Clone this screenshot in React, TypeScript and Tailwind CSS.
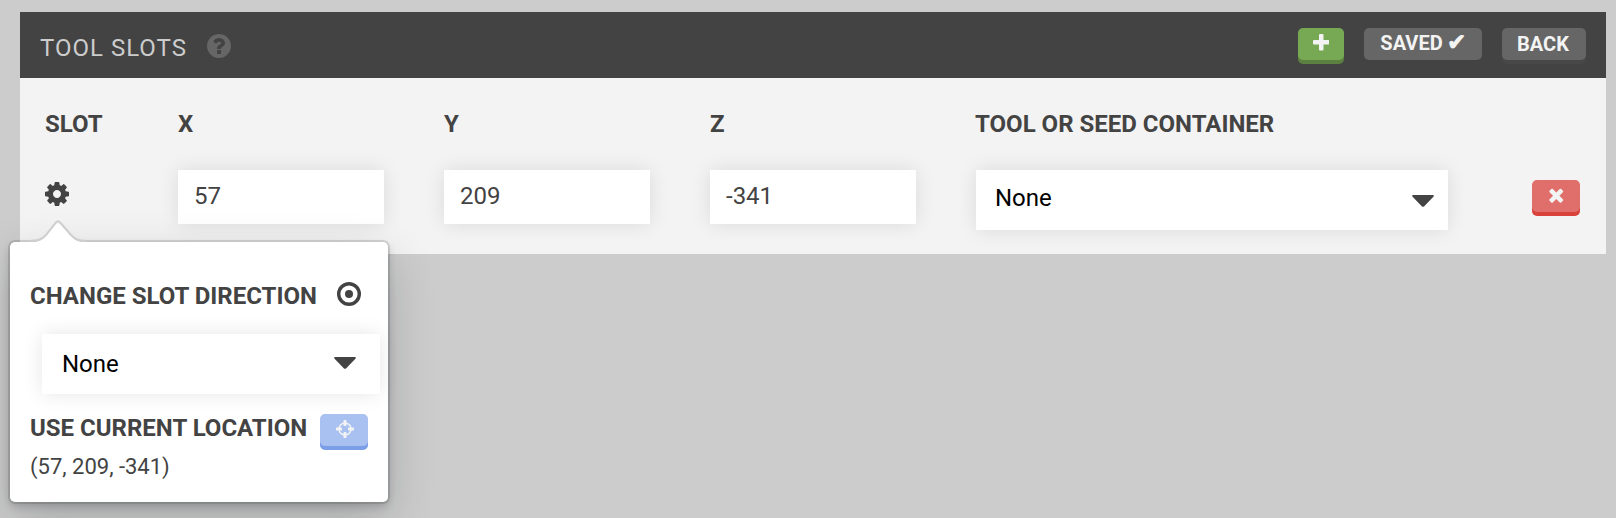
import React from "react";

const ICONS = {
  cog: "M1024 640q0 106 -75 181t-181 75t-181 -75t-75 -181t75 -181t181 -75t181 75t75 181zM1536 749v-222q0 -12 -8 -23t-20 -13l-185 -28q-19 -54 -39 -91q35 -50 107 -138q10 -12 10 -25t-9 -23q-27 -37 -99 -108t-94 -71q-12 0 -26 9l-138 108q-44 -23 -91 -38q-16 -136 -29 -186q-7 -28 -36 -28h-222q-14 0 -24.5 8.5t-11.5 21.5l-28 184q-49 16 -90 37l-141 -107q-10 -9 -25 -9q-14 0 -25 11q-126 114 -165 168q-7 10 -7 23q0 12 8 23q15 21 51 66.5t54 70.5q-27 50 -41 99l-183 27q-13 2 -21 12.5t-8 23.5v222q0 12 8 23t19 13l186 28q14 46 39 92q-40 57 -107 138q-10 12 -10 24q0 10 9 23q26 36 98.5 107.5t94.5 71.5q13 0 26 -10l138 -107q44 23 91 38q16 136 29 186q7 28 36 28h222q14 0 24.5 -8.5t11.5 -21.5l28 -184q49 -16 90 -37l142 107q9 9 24 9q13 0 25 -10q129 -119 165 -170q7 -8 7 -22q0 -12 -8 -23q-15 -21 -51 -66.5t-54 -70.5q26 -50 41 -98l183 -28q13 -2 21 -12.5t8 -23.5z",
  plus: "M1408 800v-192q0 -40 -28 -68t-68 -28h-416v-416q0 -40 -28 -68t-68 -28h-192q-40 0 -68 28t-28 68v416h-416q-40 0 -68 28t-28 68v192q0 40 28 68t68 28h416v416q0 40 28 68t68 28h192q40 0 68 -28t28 -68v-416h416q40 0 68 -28t28 -68z",
  times: "M1298 214q0 -40 -28 -68l-136 -136q-28 -28 -68 -28t-68 28l-294 294l-294 -294q-28 -28 -68 -28t-68 28l-136 136q-28 28 -28 68t28 68l294 294l-294 294q-28 28 -28 68t28 68l136 136q28 28 68 28t68 -28l294 -294l294 294q28 28 68 28t68 -28l136 -136q28 -28 28 -68t-28 -68l-294 -294l294 -294q28 -28 28 -68z",
  question: "M896 160v192q0 14 -9 23t-23 9h-192q-14 0 -23 -9t-9 -23v-192q0 -14 9 -23t23 -9h192q14 0 23 9t9 23zM1152 832q0 88 -55.5 163t-138.5 116t-170 41q-243 0 -371 -213q-15 -24 8 -42l132 -100q7 -6 19 -6q16 0 25 12q53 68 86 92q34 24 86 24q48 0 85.5 -26t37.5 -59q0 -38 -20 -61t-68 -45q-63 -28 -115.5 -86.5t-52.5 -125.5v-36q0 -14 9 -23t23 -9h192q14 0 23 9t9 23q0 19 21.5 49.5t54.5 49.5q32 18 49 28.5t46 35t44.5 48t28 60.5t12.5 81zM1536 640q0 -209 -103 -385.5t-279.5 -279.5t-385.5 -103t-385.5 103t-279.5 279.5t-103 385.5t103 385.5t279.5 279.5t385.5 103t385.5 -103t279.5 -279.5t103 -385.5z",
  crosshairs: "M1197 512h-109q-26 0 -45 19t-19 45v128q0 26 19 45t45 19h109q-32 108 -112.5 188.5t-188.5 112.5v-109q0 -26 -19 -45t-45 -19h-128q-26 0 -45 19t-19 45v109q-108 -32 -188.5 -112.5t-112.5 -188.5h109q26 0 45 -19t19 -45v-128q0 -26 -19 -45t-45 -19h-109q32 -108 112.5 -188.5t188.5 -112.5v109q0 26 19 45t45 19h128q26 0 45 -19t19 -45v-109q108 32 188.5 112.5t112.5 188.5zM1536 704v-128q0 -26 -19 -45t-45 -19h-143q-37 -161 -154.5 -278.5t-278.5 -154.5v-143q0 -26 -19 -45t-45 -19h-128q-26 0 -45 19t-19 45v143q-161 37 -278.5 154.5t-154.5 278.5h-143q-26 0 -45 19t-19 45v128q0 26 19 45t45 19h143q37 161 154.5 278.5t278.5 154.5v143q0 26 19 45t45 19h128q26 0 45 -19t19 -45v-143q161 -37 278.5 -154.5t154.5 -278.5h143q26 0 45 -19t19 -45z",
};

function Icon({ name, className, width = 1536 }: { name: keyof typeof ICONS; className: string; width?: number }) {
  return (
    <svg viewBox={`0 0 ${width} 1536`} className={className} fill="currentColor" aria-hidden="true">
      <path transform="translate(0 1408) scale(1 -1)" d={ICONS[name]} />
    </svg>
  );
}

function Caret() {
  return (
    <svg viewBox="0 0 22 12" className="h-3 w-[22px] shrink-0 text-[#434343]" fill="currentColor" aria-hidden="true">
      <path d="M1.3 0h19.4c1 0 1.5 1.1.7 1.8L12 11.4c-.6.6-1.4.6-2 0L.6 1.8C-.2 1.100.300 0 1.300 0z" />
    </svg>
  );
}

function Coordinate({ label, value }: { label: string; value: string }) {
  return (
    <div className="w-[206px]">
      <div className="h-[72px] pt-3.5 text-2xl leading-6 font-bold">{label}</div>
      <div className="flex h-[54px] items-center bg-white px-4 pb-0.5 text-2xl shadow-[0_0_20px_rgba(0,0,0,0.1)]">
        {value}
      </div>
    </div>
  );
}

function Header() {
  return (
    <header className="flex h-[66px] items-start bg-[#434343] pr-5 pl-5">
      <h3 className="pt-[22px] text-2xl leading-7 tracking-[1px] text-[#cccccc]">TOOL SLOTS</h3>
      <Icon name="question" className="mt-[22px] ml-5 size-6 text-[#666666]" />
      <div className="ml-auto flex pt-4 font-bold text-[#f3f3f3]">
        <button className="flex h-8 w-[46px] justify-center rounded-[5px] bg-[#77a955] pt-1.5 shadow-[0_4px_0_#5b8040]">
          <Icon name="plus" width={1408} className="h-[18px] w-[16.5px]" />
        </button>
        <button className="ml-5 flex h-8 w-[118px] justify-center gap-1 rounded-[5px] bg-[#666666] text-xl leading-[30px] whitespace-nowrap">
          <span>SAVED</span>
          <span className="text-[23px]">✔</span>
        </button>
        <button className="ml-5 h-8 w-[84px] rounded-[5px] bg-[#666666] pr-0.5 text-center text-xl leading-[29px] shadow-[0_4px_0_#484848]">
          BACK
        </button>
      </div>
    </header>
  );
}

function SlotPopover() {
  return (
    <div className="absolute top-[242px] left-[10px] h-[260px] w-[378px] rounded-[5px] bg-white px-5 shadow-[0_0_0_2px_rgba(16,22,26,0.13),0_4px_8px_rgba(16,22,26,0.2),0_18px_48px_rgba(16,22,26,0.2)]">
      <svg viewBox="0 0 60 26" className="absolute -top-6 left-[18px] h-[26px] w-[60px]" aria-hidden="true">
        <path
          d="M2 24C11 24 14 22 18 18L27 7.500C29 5.200 31 5.200 33 7.500L43 18C47 22 50 24 58 24V26H2z"
          fill="white"
        />
        <path
          d="M2 23C11 23 14 21 18 17L27 5.500C29 2.500 31 2.500 33 5.500L43 17C47 21 50 23 58 23"
          fill="none"
          stroke="#cdcecf"
          strokeWidth="2"
        />
      </svg>
      <div className="flex items-center pt-[38px]">
        <span className="text-2xl leading-8 font-bold whitespace-nowrap">CHANGE SLOT DIRECTION</span>
        <svg viewBox="0 0 24 24" className="mb-1 ml-5 size-6 shrink-0" aria-hidden="true">
          <circle cx="12" cy="12" r="10.300" fill="none" stroke="currentColor" strokeWidth="3.400" />
          <circle cx="12" cy="12" r="4" fill="currentColor" />
        </svg>
      </div>
      <div className="mt-[22px] ml-3 flex h-[60px] w-[338px] items-center justify-between bg-white pr-6 pl-5 text-2xl text-black shadow-[0_0_20px_rgba(0,0,0,0.1)]">
        None
        <div className="pb-0.5">
          <Caret />
        </div>
      </div>
      <div className="flex items-start justify-between pt-5">
        <span className="text-2xl leading-7 font-bold whitespace-nowrap">USE CURRENT LOCATION</span>
        <button className="flex h-8 w-12 justify-center rounded-[5px] bg-[#a9c1f0] pt-1.5 pl-px text-[#f3f3f3] shadow-[0_4px_0_#7a9fe8]">
          <Icon name="crosshairs" className="size-[18px]" />
        </button>
      </div>
      <div className="pt-[7px] text-[22px] leading-7">(57, 209, -341)</div>
    </div>
  );
}

export default function App() {
  return (
    <main className="relative h-[518px] w-[1616px] overflow-hidden bg-[#cccccc] px-5 pt-3 font-[Roboto,sans-serif] text-[#434343]">
      <section className="h-[242px] w-[1586px] bg-[#f3f3f3]">
        <Header />
        <div className="flex pt-5 pl-[25px]">
          <div className="w-[133px]">
            <div className="h-[72px] pt-3.5 text-2xl leading-6 font-bold">SLOT</div>
            <Icon name="cog" className="mt-3 size-6" />
          </div>
          <div className="flex gap-[60px]">
            <Coordinate label="X" value="57" />
            <Coordinate label="Y" value="209" />
            <Coordinate label="Z" value="-341" />
            <div className="w-[472px]">
              <div className="-ml-px h-[72px] pt-3.5 text-2xl leading-6 font-bold">TOOL OR SEED CONTAINER</div>
              <div className="flex h-[60px] items-center justify-between bg-white pr-3.5 pb-1 pl-[19px] text-2xl text-black shadow-[0_0_20px_rgba(0,0,0,0.1)]">
                None
                <div className="pt-1.5">
                  <Caret />
                </div>
              </div>
            </div>
          </div>
          <button className="mt-[82px] ml-[84px] flex h-8 w-12 justify-center rounded-[5px] bg-[#e06e6a] pt-1.5 text-[#f3f3f3] shadow-[0_4px_0_#d9423a]">
            <Icon name="times" width={1408} className="h-[18px] w-[16.5px]" />
          </button>
        </div>
      </section>
      <SlotPopover />
    </main>
  );
}
